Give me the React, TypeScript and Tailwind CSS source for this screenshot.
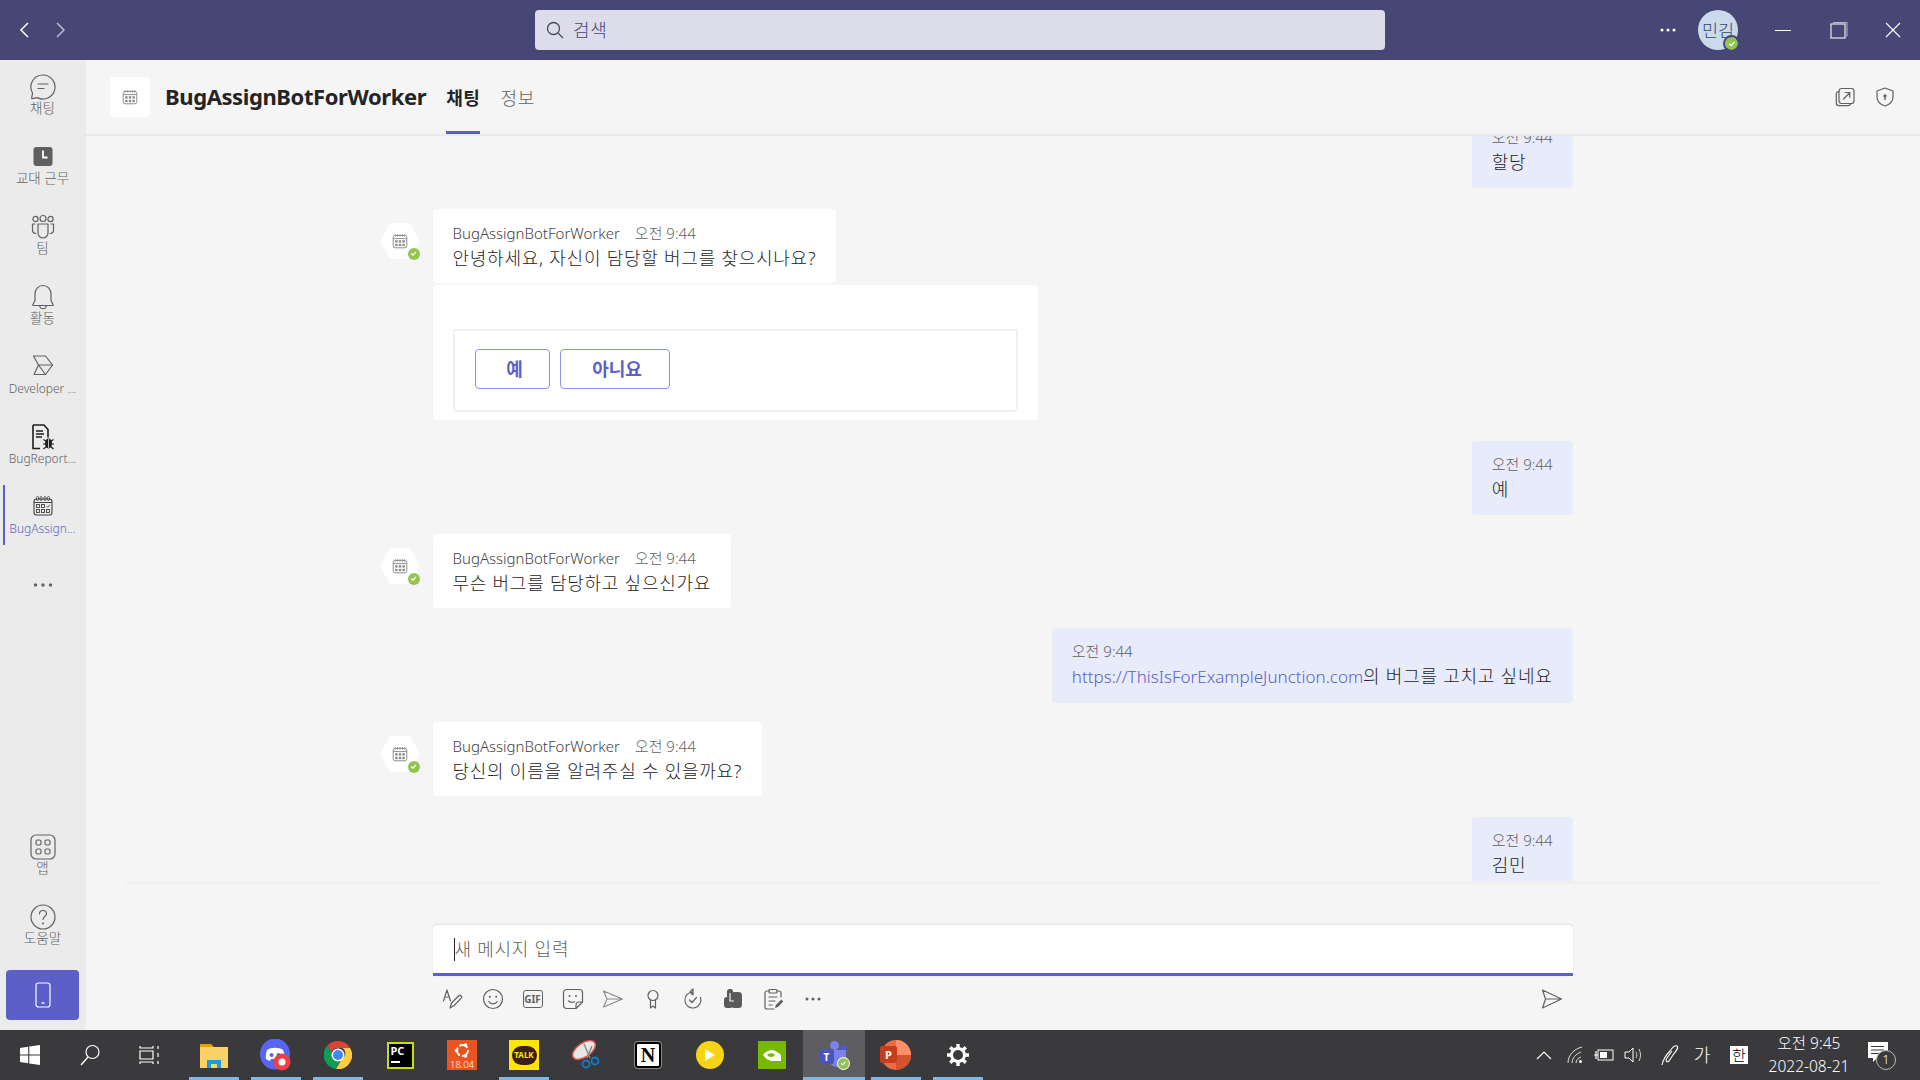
import React from 'react'

const Svg = ({w = 24, h = 24, vb, children, className = ''}: any) => (
    <svg width={w} height={h} viewBox={vb || `0 0 ${w} ${h}`} fill="none" className={`shrink-0 ${className}`}>
        {children}
    </svg>
)

const stroke = {stroke: '#616161', strokeWidth: 1.2, strokeLinecap: 'round', strokeLinejoin: 'round'} as const

function Calendar({size = 20, color = '#616161'}: any) {
    return (
        <Svg w={size} h={size} vb="0 0 20 20">
            <rect x="1.5" y="3" width="17" height="15.5" rx="2.5" stroke={color} strokeWidth="1.2" fill="none"/>
            <path d="M1.5 7h17" stroke={color} strokeWidth="1.2"/>
            <path d="M4 1.5v3M7 1.5v3M10 1.5v3M13 1.5v3M16 1.5v3" stroke={color} strokeWidth="1.3"/>
            <g fill={color}>
                <rect x="4" y="9" width="3" height="3"/>
                <rect x="8.5" y="9" width="3" height="3"/>
                <rect x="13" y="9" width="3" height="3"/>
                <rect x="4" y="13.5" width="3" height="3"/>
                <rect x="8.5" y="13.5" width="3" height="3"/>
                <rect x="13" y="13.5" width="3" height="3"/>
            </g>
        </Svg>
    )
}

function Check({size = 12, ring = ''}: any) {
    return (
        <span className={`flex items-center justify-center rounded-full bg-[#92c353] ${ring}`} style={{width: size, height: size}}>
            <svg width={size * 0.6} height={size * 0.6} viewBox="0 0 10 10" fill="none">
                <path d="M2 5.2l2.1 2.1L8 3" stroke="#fff" strokeWidth="1.6" strokeLinecap="round" strokeLinejoin="round"/>
            </svg>
        </span>
    )
}

const railIcons: any = {
    chat: (
        <Svg w={26} h={26}>
            <path d="M13 1a12 12 0 1 1-5.6 22.600L2.300 24.600c-.5.1-.8-.3-.7-.7l1-4.700A12 12 0 0 1 13 1z" {...stroke}/>
            <path d="M8 10h10M8 14.500h6" {...stroke}/>
        </Svg>
    ),
    shift: (
        <Svg w={26} h={26}>
            <rect x="3.500" y="3" width="19" height="19" rx="3" fill="#5f5f5f"/>
            <path d="M13 6.500v7h4.500" stroke="#fff" strokeWidth="1.800"/>
        </Svg>
    ),
    team: (
        <Svg w={26} h={26}>
            <circle cx="5.500" cy="5" r="2.600" {...stroke}/>
            <circle cx="13" cy="4.500" r="3" {...stroke}/>
            <circle cx="20.500" cy="5" r="2.600" {...stroke}/>
            <path d="M8 10h10v9a5 5 0 0 1-10 0v-9z" {...stroke}/>
            <path d="M5 10H2.500v6c0 2 1.200 3.300 3.300 3.500M21 10h2.500v6c0 2-1.200 3.300-3.300 3.500" {...stroke}/>
        </Svg>
    ),
    bell: (
        <Svg w={26} h={26}>
            <path d="M13 1.500c-5 0-8 4-8 8.500v6.500L2.800 20.700c-.2.400 0 .8.500.8h19.400c.5 0 .7-.4.500-.8L21 16.500V10c0-4.500-3-8.500-8-8.500z" {...stroke}/>
            <path d="M9.500 21.500c.3 2 1.700 3.200 3.500 3.200s3.200-1.200 3.500-3.200" {...stroke}/>
        </Svg>
    ),
    dev: (
        <Svg w={26} h={26}>
            <path d="M3.500 2h12l7 9-7 9.500H4L8.500 11 3.500 2z" {...stroke}/>
            <path d="M8.500 11h14M8.500 11l7 9.500" {...stroke}/>
        </Svg>
    ),
    bug: (
        <Svg w={26} h={26}>
            <path d="M3 1h11l4 4.500v8M10 24.500H3V1" stroke="#1f1f1f" strokeWidth="1.600"/>
            <path d="M6 7h7M6 10h8M6 13h6" stroke="#1f1f1f" strokeWidth="1.300"/>
            <ellipse cx="18.500" cy="19.500" rx="3.500" ry="5" fill="#1f1f1f"/>
            <path d="M13.500 15.500l3 2M23.500 15.500l-3 2M13 20h3M24 20h-3M13.500 25l3-2.500M23.500 25l-3-2.500" stroke="#1f1f1f" strokeWidth="1.100"/>
            <path d="M18.500 15v9" stroke="#ebebeb" strokeWidth="0.800"/>
        </Svg>
    ),
    calendar: (
        <Svg w={26} h={26}>
            <rect x="4" y="5" width="18" height="16" rx="2.500" stroke="#424242" strokeWidth="1.100"/>
            <path d="M4 8.500h18" stroke="#424242" strokeWidth="1"/>
            <path d="M6.500 3.500a1 1 0 0 1 2 0v2a1 1 0 0 1-2 0zM10 3.500a1 1 0 0 1 2 0v2a1 1 0 0 1-2 0zM14 3.500a1 1 0 0 1 2 0v2a1 1 0 0 1-2 0zM17.500 3.500a1 1 0 0 1 2 0v2a1 1 0 0 1-2 0z" stroke="#424242" strokeWidth="0.800"/>
            <g stroke="#424242" strokeWidth="0.900">
                <rect x="6.500" y="10.500" width="3" height="3"/>
                <rect x="11.500" y="10.500" width="3" height="3"/>
                <path d="M16.500 12l1.200 1.200 2-2.400"/>
                <rect x="6.500" y="15.500" width="3" height="3"/>
                <rect x="11.500" y="15.500" width="3" height="3"/>
                <rect x="16.500" y="15.500" width="3" height="3"/>
            </g>
        </Svg>
    ),
    dots: (
        <Svg w={26} h={26}>
            <circle cx="5.500" cy="13" r="1.700" fill="#616161"/>
            <circle cx="13" cy="13" r="1.700" fill="#616161"/>
            <circle cx="20.500" cy="13" r="1.700" fill="#616161"/>
        </Svg>
    ),
    apps: (
        <Svg w={26} h={26}>
            <rect x="1" y="1" width="24" height="24" rx="5" {...stroke}/>
            <rect x="6" y="6" width="5" height="5" rx="1.500" {...stroke}/>
            <rect x="15" y="6" width="5" height="5" rx="1.500" {...stroke}/>
            <rect x="6" y="15" width="5" height="5" rx="1.500" {...stroke}/>
            <rect x="15" y="15" width="5" height="5" rx="1.500" {...stroke}/>
        </Svg>
    ),
    help: (
        <Svg w={26} h={26}>
            <circle cx="13" cy="13" r="12" {...stroke}/>
            <path d="M9.500 10c0-2 1.500-3.500 3.500-3.500s3.500 1.400 3.500 3.300c0 2.700-3.500 2.700-3.500 5.700" {...stroke}/>
            <circle cx="13" cy="19.500" r="1" fill="#616161"/>
        </Svg>
    ),
}

function RailItem({icon, label, active, latin}: any) {
    return (
        <div className="relative flex h-[60px] w-full flex-col items-center pt-[9px]">
            {active && <div className="absolute left-[3px] top-0 h-[60px] w-[2px] bg-[#5b5fc7]"/>}
            {railIcons[icon]}
            <span className={`w-full truncate px-[6px] text-center leading-[17px] ${latin ? 'text-[12px]' : 'text-[13.500px]'} ${active ? 'text-[#5b5fc7]' : 'text-[#616161]'}`}>
                {label}
            </span>
        </div>
    )
}

function Rail() {
    return (
        <aside className="z-10 flex h-full w-[85px] shrink-0 flex-col items-center justify-between bg-[#ebebeb] pb-[10px] pt-[5px] shadow-[1px_0_2px_rgba(0,0,0,0.05)]">
            <div className="flex w-full flex-col items-center gap-[10px]">
                <RailItem icon="chat" label="채팅"/>
                <RailItem icon="shift" label="교대 근무"/>
                <RailItem icon="team" label="팀"/>
                <RailItem icon="bell" label="활동"/>
                <RailItem icon="dev" label="Developer ..." latin/>
                <RailItem icon="bug" label="BugReport..." latin/>
                <RailItem icon="calendar" label="BugAssign..." latin active/>
                <div className="flex h-[60px] items-center">{railIcons.dots}</div>
            </div>
            <div className="flex w-full flex-col items-center gap-[10px]">
                <RailItem icon="apps" label="앱"/>
                <RailItem icon="help" label="도움말"/>
                <button className="mt-[5px] flex h-[50px] w-[73px] items-center justify-center rounded-[4px] bg-[#5b5fc7]">
                    <Svg w={16} h={26}>
                        <rect x="1" y="1" width="14" height="24" rx="2.500" stroke="#fff" strokeWidth="1.200"/>
                        <path d="M6.500 21h3" stroke="#fff" strokeWidth="1.400"/>
                    </Svg>
                </button>
            </div>
        </aside>
    )
}

function TitleBar() {
    return (
        <header className="relative flex h-[60px] shrink-0 items-center bg-[#464775]">
            <div className="flex w-[85px] items-center justify-between pl-[18px] pr-[18px]">
                <Svg w={12} h={18}><path d="M10 2L3 9l7 7" stroke="#fff" strokeWidth="1.500"/></Svg>
                <Svg w={12} h={18}><path d="M2 2l7 7-7 7" stroke="#b9bad0" strokeWidth="1.500"/></Svg>
            </div>
            <div className="ml-[450px] flex h-[40px] w-[850px] items-center gap-[9px] rounded-[4px] bg-[#dcdcea] pl-[11px]">
                <Svg w={18} h={18}>
                    <circle cx="7.500" cy="7.500" r="6" stroke="#4a4a5a" strokeWidth="1.300"/>
                    <path d="M12 12l5 5" stroke="#4a4a5a" strokeWidth="1.300"/>
                </Svg>
                <span className="text-[18px] tracking-[0.8px] text-[#464775]">검색</span>
            </div>
            <div className="ml-auto flex items-center">
                <Svg w={18} h={6}>
                    <circle cx="3" cy="3" r="1.500" fill="#fff"/>
                    <circle cx="9" cy="3" r="1.500" fill="#fff"/>
                    <circle cx="15" cy="3" r="1.500" fill="#fff"/>
                </Svg>
                <div className="relative ml-[21px] flex h-[40px] w-[40px] items-center justify-center rounded-full bg-[#cbdaea] text-[17.500px] text-[#2f4a68]">
                    민김
                    <div className="absolute bottom-0 right-0">
                        <Check size={13} ring="outline outline-2 outline-[#464775]"/>
                    </div>
                </div>
                <div className="ml-[37px] flex h-[60px] w-[16px] items-center">
                    <div className="h-[1px] w-[16px] bg-white"/>
                </div>
                <div className="ml-[39px] flex h-[60px] items-center">
                    <Svg w={18} h={18}>
                        <path d="M3.500 2.500v-1h13.500v13.500h-1" stroke="#b9bad0" strokeWidth="1"/>
                        <rect x="1" y="3" width="14" height="14" stroke="#e8e8f2" strokeWidth="1.200"/>
                    </Svg>
                </div>
                <div className="ml-[37px] mr-[19px] flex h-[60px] items-center">
                    <Svg w={16} h={16}><path d="M1 1l14 14M15 1L1 15" stroke="#fff" strokeWidth="1.100"/></Svg>
                </div>
            </div>
        </header>
    )
}

function ChatHeader() {
    return (
        <div className="flex h-[76px] shrink-0 items-center border-b-2 border-[#ebebeb] pl-[25px] pr-[25px]">
            <div className="flex h-[40px] w-[40px] items-center justify-center rounded-[4px] bg-white">
                <Calendar size={16} color="#8a8a8a"/>
            </div>
            <h1 className="-mt-[2px] ml-[15px] text-[22px] font-bold leading-none tracking-[-0.4px] text-[#242424]">BugAssignBotForWorker</h1>
            <div className="relative ml-[20px] flex h-[74px] items-center pt-[2px] text-[18px] font-bold tracking-[0.6px] text-[#242424]">
                채팅
                <div className="absolute bottom-0 left-0 h-[3px] w-full bg-[#5b5fc7]"/>
            </div>
            <span className="ml-[20px] pt-[2px] text-[18px] tracking-[0.6px] text-[#616161]">정보</span>
            <div className="ml-auto flex items-center gap-[20px]">
                <Svg w={20} h={20}>
                    <rect x="4" y="1.500" width="15" height="15" rx="2.500" {...stroke}/>
                    <path d="M4 4.500c-2 0-2.700 1-2.700 2.500v9c0 1.700 1 2.700 2.700 2.700h9c1.500 0 2.500-.7 2.500-2.200" {...stroke}/>
                    <path d="M8.500 12l6-6M10 5.500h4.800v4.800" {...stroke}/>
                </Svg>
                <Svg w={20} h={20}>
                    <path d="M10 1l8 3v6c0 4.500-3.500 7.500-8 9-4.500-1.500-8-4.500-8-9V4l8-3z" {...stroke}/>
                    <circle cx="10" cy="8.800" r="1.600" fill="#616161"/>
                    <path d="M10 9v4" stroke="#616161" strokeWidth="1.400"/>
                </Svg>
            </div>
        </div>
    )
}

function BotAvatar() {
    return (
        <div className="absolute -left-[53px] top-[14px] h-[36px] w-[40px]">
            <svg width="40" height="36" viewBox="0 0 40 36" className="absolute inset-0">
                <path d="M10 0h20l10 18-10 18H10L0 18z" fill="#fff"/>
            </svg>
            <div className="absolute left-[12px] top-[10px]"><Calendar size={16} color="#8a8a8a"/></div>
            <div className="absolute right-0 top-[25px]"><Check size={12}/></div>
        </div>
    )
}

function BotBubble({text, className = ''}: any) {
    return (
        <div className={`relative self-start rounded-[4px] bg-white px-[20px] pb-[12px] pt-[14px] ${className}`}>
            <BotAvatar/>
            <div className="flex h-[20px] items-center text-[15px] text-[#424242]">
                <span>BugAssignBotForWorker</span>
                <span className="ml-[15px] text-[#616161]">오전 9:44</span>
            </div>
            <p className="mt-[2px] whitespace-nowrap text-[18px] leading-[26px] tracking-[0.75px] text-[#242424]">{text}</p>
        </div>
    )
}

function SelfBubble({children, className = ''}: any) {
    return (
        <div className={`self-end rounded-[4px] bg-[#e8ebfa] px-[20px] pb-[13px] pt-[13px] ${className}`}>
            <div className="flex h-[20px] items-center text-[15px] text-[#616161]">오전 9:44</div>
            <p className="mt-[2px] whitespace-nowrap text-[18px] leading-[26px] tracking-[0.75px] text-[#242424]">{children}</p>
        </div>
    )
}

function Messages() {
    return (
        <div className="min-h-0 flex-1 overflow-hidden">
            <div className="mx-auto -mt-[22px] flex w-[1140px] flex-col">
                <SelfBubble>할당</SelfBubble>
                <BotBubble className="mt-[21px]" text="안녕하세요, 자신이 담당할 버그를 찾으시나요?"/>
                <div className="mt-[2px] w-[605px] rounded-[4px] bg-white px-[20px] pb-[8px] pt-[44px]">
                    <div className="flex h-[83px] gap-[10px] rounded-b-[4px] border-2 border-[#f0f0f0] px-[20px] pt-[18px]">
                        <button className="h-[40px] w-[75px] rounded-[4px] border border-[#8f92ec] pl-[5px] text-[18px] font-bold text-[#5b5fc7]">예</button>
                        <button className="h-[40px] w-[110px] rounded-[4px] border border-[#8f92ec] pl-[5px] text-[18px] font-bold text-[#5b5fc7]">아니요</button>
                    </div>
                </div>
                <SelfBubble className="mt-[21px]">예</SelfBubble>
                <BotBubble className="mt-[19px]" text="무슨 버그를 담당하고 싶으신가요"/>
                <SelfBubble className="mt-[20px]">
                    <span className="text-[17px] tracking-normal text-[#5b5fc7]">https://ThisIsForExampleJunction.com</span>의 버그를 고치고 싶네요
                </SelfBubble>
                <BotBubble className="mt-[19px]" text="당신의 이름을 알려주실 수 있을까요?"/>
                <SelfBubble className="mt-[21px]">김민</SelfBubble>
            </div>
        </div>
    )
}

function Compose() {
    const icons = [
        <Svg w={22} h={22} key="format">
            <path d="M1.500 13L5 2l3.500 11M2.800 9h4.500" {...stroke}/>
            <path d="M8 20l1.500-5L17 7.500c1-1 3.500 1 2.500 2.300L12 17.500 8 20z" {...stroke}/>
        </Svg>,
        <Svg w={22} h={22} key="emoji">
            <circle cx="11" cy="11" r="9.500" {...stroke}/>
            <circle cx="7.800" cy="8.800" r="1" fill="#616161"/>
            <circle cx="14.200" cy="8.800" r="1" fill="#616161"/>
            <path d="M6.800 13.500c1 1.700 2.500 2.400 4.200 2.400s3.200-.7 4.200-2.400" {...stroke}/>
        </Svg>,
        <div key="gif" className="flex h-[18px] w-[20px] items-center justify-center rounded-[3px] border-[1.3px] border-[#616161] text-[10px] font-bold leading-none text-[#616161]">GIF</div>,
        <Svg w={22} h={22} key="sticker">
            <path d="M14 20.500H4.500a3 3 0 0 1-3-3v-13a3 3 0 0 1 3-3h13a3 3 0 0 1 3 3V14l-6.500 6.500z" {...stroke}/>
            <path d="M14 20.500V17a3 3 0 0 1 3-3h3.500" {...stroke}/>
            <circle cx="7.500" cy="8" r="1" fill="#616161"/>
            <circle cx="14" cy="8" r="1" fill="#616161"/>
            <path d="M6.500 13c1.500 1.500 3.500 1.700 6 .7" {...stroke}/>
        </Svg>,
        <Svg w={22} h={22} key="arrow">
            <path d="M1.500 3L20.500 11 1.500 19l3.500-8-3.500-8zM5 11h15.500" stroke="#8a8a8a" strokeWidth="1.100" strokeLinejoin="round"/>
        </Svg>,
        <Svg w={22} h={22} key="medal">
            <circle cx="11" cy="7.500" r="5" {...stroke}/>
            <path d="M8.500 12v8l2.500-2 2.500 2v-8" {...stroke}/>
        </Svg>,
        <Svg w={22} h={22} key="loop">
            <path d="M11 4a8 8 0 1 0 7.500 5.500M11 1v6l-3-3 3-3z" {...stroke}/>
            <path d="M7.500 12l2.500 2.500 4.500-5" {...stroke}/>
        </Svg>,
        <Svg w={22} h={22} key="praise">
            <rect x="9" y="4" width="11" height="16" rx="3.500" fill="#5a5a5a"/>
            <rect x="5" y="1" width="6" height="12" rx="2.500" fill="#5a5a5a"/>
            <rect x="2" y="9" width="9" height="11" rx="3" fill="#5a5a5a"/>
            <path d="M8 5v8h4" stroke="#f5f5f5" strokeWidth="1.200"/>
        </Svg>,
        <Svg w={22} h={22} key="clip">
            <path d="M7 3H5a2 2 0 0 0-2 2v14a2 2 0 0 0 2 2h7M15 3h2a2 2 0 0 1 2 2v4" {...stroke}/>
            <rect x="7" y="1.500" width="8" height="3.500" rx="1" {...stroke}/>
            <path d="M7 9h8M7 13h6M7 17h3" {...stroke}/>
            <path d="M13 20l.8-3 5.500-5.500 2 2-5.300 5.500-3 1z" fill="#616161"/>
        </Svg>,
        <Svg w={18} h={6} key="more">
            <circle cx="3" cy="3" r="1.500" fill="#616161"/>
            <circle cx="9" cy="3" r="1.500" fill="#616161"/>
            <circle cx="15" cy="3" r="1.500" fill="#616161"/>
        </Svg>,
    ]
    return (
        <div className="h-[149px] shrink-0">
            <div className="mx-[40px] h-[3px] bg-[#f0f0f0]"/>
            <div className="mx-auto mt-[40px] w-[1140px]">
                <div className="flex h-[52px] items-center rounded-t-[4px] border-b-[3px] border-t border-b-[#5b5fc7] border-t-[#e6e6e6] bg-white pl-[21px] shadow-[0_0_1px_rgba(0,0,0,0.2)]">
                    <div className="h-[23px] w-[1px] bg-[#242424]"/>
                    <span className="text-[18px] tracking-[0.75px] text-[#616161]">새 메시지 입력</span>
                </div>
                <div className="mt-[3px] flex h-[40px] items-center">
                    {icons.map((icon, i) => (
                        <div key={i} className="flex h-[40px] w-[40px] items-center justify-center">{icon}</div>
                    ))}
                    <div className="ml-auto mr-[10px] flex h-[40px] w-[22px] items-center justify-center">
                        <Svg w={22} h={22}>
                            <path d="M1.500 2L20.500 11 1.500 20l3-9-3-9zM4.500 11H20" {...stroke}/>
                        </Svg>
                    </div>
                </div>
            </div>
        </div>
    )
}

const taskIcons = [
    {
        key: 'folder', bar: true,
        el: (
            <Svg w={28} h={26}>
                <path d="M0 2h11l3 3H0z" fill="#e2a100"/>
                <rect x="0" y="5" width="28" height="21" fill="#fcd264"/>
                <path d="M7 26v-8h14v8h-4v-4h-6v4z" fill="#1d9be0"/>
            </Svg>
        ),
    },
    {
        key: 'discord', bar: true,
        el: (
            <Svg w={32} h={32}>
                <ellipse cx="15" cy="15" rx="15" ry="15.500" fill="#5865f2"/>
                <path d="M7 11c4-3 12-3 16 0 1.500 3 2 6 1.500 9-1.500 1.200-3 1.700-4 2l-1-2h-8.500l-1 2c-1-.3-2.500-.8-4-2-.5-3 0-6 1-9z" fill="#fff"/>
                <circle cx="11.500" cy="16" r="2" fill="#5865f2"/>
                <circle cx="18.500" cy="16" r="2" fill="#5865f2"/>
                <circle cx="22" cy="23" r="8.500" fill="#ed4245"/>
                <circle cx="22" cy="23" r="3.500" fill="#fff"/>
            </Svg>
        ),
    },
    {
        key: 'chrome', bar: true,
        el: (
            <Svg w={28} h={28}>
                <path d="M14 0a14 14 0 0 1 12.100 7H14a7 7 0 0 0-6.500 4.500L3.500 4.500A14 14 0 0 1 14 0z" fill="#db4437"/>
                <path d="M3.500 4.500l5.800 10a6 6 0 0 0 6.500 5.500L12 28A14 14 0 0 1 3.500 4.500z" fill="#0f9d58"/>
                <path d="M26.100 7A14 14 0 0 1 12 28l6-10.500a6 6 0 0 0 .5-10.500z" fill="#ffcd40"/>
                <circle cx="14" cy="14" r="6.500" fill="#fff"/>
                <circle cx="14" cy="14" r="5" fill="#4285f4"/>
            </Svg>
        ),
    },
    {
        key: 'pycharm',
        el: (
            <div className="flex h-[27px] w-[27px] flex-col border-2 border-[#c8dc1e] bg-black pl-[2px] pt-[1px] text-[11px] font-bold leading-[12px] text-white">
                PC
                <div className="mt-[4px] h-[2px] w-[9px] bg-white"/>
            </div>
        ),
    },
    {
        key: 'ubuntu',
        el: (
            <div className="flex h-[30px] w-[30px] flex-col items-center bg-[#e95420] pt-[2px]">
                <Svg w={17} h={17}>
                    <circle cx="8.500" cy="8.500" r="5.500" stroke="#fff" strokeWidth="1.800" strokeDasharray="9 2"/>
                    <circle cx="2.500" cy="8.500" r="1.800" fill="#fff"/>
                    <circle cx="11.500" cy="3" r="1.800" fill="#fff"/>
                    <circle cx="11.500" cy="14" r="1.800" fill="#fff"/>
                </Svg>
                <span className="text-[9.500px] leading-[11px] text-white">18.04</span>
            </div>
        ),
    },
    {
        key: 'talk', bar: true,
        el: (
            <div className="relative flex h-[30px] w-[30px] items-center justify-center bg-[#ffe600]">
                <div className="flex h-[19px] w-[25px] items-center justify-center rounded-full bg-[#3c1e1e] text-[8px] font-bold leading-none text-[#ffe600]">TALK</div>
            </div>
        ),
    },
    {
        key: 'snip',
        el: (
            <Svg w={30} h={30}>
                <ellipse cx="13" cy="10" rx="13" ry="7" transform="rotate(-35 13 10)" fill="#e8e8e8" stroke="#d9534f" strokeWidth="1.500"/>
                <path d="M13 4l6 14M21 6l-5 12" stroke="#8a8a8a" strokeWidth="1.500"/>
                <circle cx="15" cy="24" r="3.500" stroke="#0f7fd0" strokeWidth="1.800"/>
                <circle cx="24" cy="21" r="3.500" stroke="#0f7fd0" strokeWidth="1.800"/>
            </Svg>
        ),
    },
    {
        key: 'notion',
        el: (
            <div className="flex h-[26px] w-[26px] items-center justify-center rounded-[3px] border-2 border-black bg-white font-['Liberation_Serif',serif] text-[20px] font-bold leading-none text-black shadow-[0_0_0_1px_#888]">N</div>
        ),
    },
    {
        key: 'play',
        el: (
            <div className="flex h-[28px] w-[28px] items-center justify-center rounded-full bg-[#f7d416]">
                <Svg w={12} h={14}><path d="M1 1l10 6-10 6z" fill="#fff"/></Svg>
            </div>
        ),
    },
    {
        key: 'nvidia',
        el: (
            <div className="flex h-[28px] w-[28px] items-center justify-center bg-[#76b900]">
                <Svg w={20} h={14}>
                    <path d="M1 7c3-5 10-6 14-3 2 1 3 2 4 3v6h-8c-4 0-7-2-10-6z" fill="#fff"/>
                    <path d="M5 7c2-2.500 6-2.500 8 0-2 2.500-6 2.500-8 0z" fill="#76b900"/>
                </Svg>
            </div>
        ),
    },
    {
        key: 'teams', bar: true, active: true,
        el: (
            <div className="relative h-[28px] w-[30px]">
                <div className="absolute left-[11px] top-0 h-[9px] w-[9px] rounded-full bg-[#7b83eb]"/>
                <div className="absolute right-[2px] top-[4px] h-[7px] w-[7px] rounded-full bg-[#5059c9]"/>
                <div className="absolute bottom-[2px] left-[10px] h-[17px] w-[17px] rounded-b-[8px] bg-[#7b83eb]"/>
                <div className="absolute left-0 top-[8px] flex h-[15px] w-[15px] items-center justify-center rounded-[2px] bg-[#4b53bc] text-[10px] font-bold leading-none text-white">T</div>
                <div className="absolute -bottom-[1px] -right-[1px] rounded-full bg-white p-[1px]"><Check size={11}/></div>
            </div>
        ),
    },
    {
        key: 'ppt', bar: true,
        el: (
            <div className="relative h-[30px] w-[30px]">
                <div className="absolute right-0 top-0 h-[30px] w-[30px] overflow-hidden rounded-full bg-[#ed6c47]">
                    <div className="ml-[15px] h-[15px] w-[15px] bg-[#ff8f6b]"/>
                    <div className="ml-[15px] h-[15px] w-[15px] bg-[#d35230]"/>
                </div>
                <div className="absolute -left-[1px] top-[6px] flex h-[17px] w-[17px] items-center justify-center rounded-[2px] bg-[#c43e1c] text-[11px] font-bold leading-none text-white">P</div>
            </div>
        ),
    },
    {
        key: 'gear', bar: true,
        el: (
            <Svg w={24} h={24}>
                <circle cx="12" cy="12" r="6.500" stroke="#fff" strokeWidth="3"/>
                <path d="M12 1v5M12 18v5M1 12h5M18 12h5M4.200 4.200l3.600 3.600M16.200 16.200l3.600 3.600M19.800 4.200l-3.600 3.600M7.800 16.200l-3.600 3.600" stroke="#fff" strokeWidth="3.400"/>
            </Svg>
        ),
    },
]

function Taskbar() {
    return (
        <footer className="flex h-[50px] shrink-0 items-center bg-[#3a3a3c] text-white">
            <div className="flex h-full w-[60px] items-center justify-center">
                <Svg w={20} h={20}>
                    <path d="M0 3l8.200-1.200v7.700H0zM9.300 1.600L20 0v9.500H9.300zM0 10.500h8.200v7.700L0 17zM9.300 10.500H20V20L9.300 18.400z" fill="#fff"/>
                </Svg>
            </div>
            <div className="flex h-full w-[60px] items-center justify-center">
                <Svg w={22} h={22}>
                    <circle cx="13.500" cy="8" r="6.500" stroke="#fff" strokeWidth="1.200"/>
                    <path d="M9 13L2 21" stroke="#fff" strokeWidth="1.300"/>
                </Svg>
            </div>
            <div className="flex h-full w-[63px] items-center justify-center pr-[3px]">
                <Svg w={22} h={20}>
                    <path d="M1 1v2h13V1M1 19v-2h13v2M1 6h13v8H1z" stroke="#fff" strokeWidth="1.200"/>
                    <path d="M19 1v3M19 8v4M19 16v3" stroke="#fff" strokeWidth="1.200"/>
                </Svg>
            </div>
            {taskIcons.map(t => (
                <div key={t.key} className={`relative flex h-full w-[62px] items-center justify-center ${t.active ? 'bg-[#5e5e60]' : ''}`}>
                    {t.el}
                    {t.bar && <div className={`absolute bottom-0 h-[3px] bg-[#76b9ed] ${t.active ? 'inset-x-0' : 'inset-x-[6px]'}`}/>}
                </div>
            ))}
            <div className="ml-auto flex h-full items-center">
                <Svg w={16} h={10} className="mr-[15px]"><path d="M1 9l7-7 7 7" stroke="#fff" strokeWidth="1.100"/></Svg>
                <Svg w={16} h={18} className="mr-[11px]">
                    <path d="M1 17C1 9 7 3 15 1M5 17c0-5 4-9 9-11M9 17c0-3 2-5 5-6" stroke="#ddd" strokeWidth="1"/>
                    <circle cx="13.500" cy="15.500" r="1.500" fill="#fff"/>
                </Svg>
                <Svg w={20} h={14} className="mr-[10px]">
                    <rect x="4" y="2" width="15" height="10" stroke="#fff" strokeWidth="1"/>
                    <rect x="6" y="4" width="7" height="6" fill="#fff"/>
                    <path d="M0 7h4M2 3v8" stroke="#fff" strokeWidth="1.200"/>
                </Svg>
                <Svg w={20} h={18} className="mr-[16px]">
                    <path d="M1 6h4l4-4v14l-4-4H1z" stroke="#fff" strokeWidth="1"/>
                    <path d="M12 6c1 2 1 4 0 6M15 3c2 4 2 8 0 12" stroke="#ccc" strokeWidth="1"/>
                </Svg>
                <Svg w={20} h={22} className="mr-[13px]">
                    <path d="M2 21c1-5 4-10 8-14 2-3 5-6 7-5 2 2-1 5-4 9l-4 6c-2 2-4 0-2-3l5-7" stroke="#fff" strokeWidth="1.100"/>
                </Svg>
                <span className="mr-[19px] w-[18px] text-center text-[18px] leading-none">가</span>
                <div className="mr-[21px] flex h-[18px] w-[18px] items-center justify-center bg-white text-[15px] leading-none text-black">한</div>
                <div className="mr-[19px] flex w-[80px] flex-col items-center whitespace-nowrap text-[15.500px] leading-[23px]">
                    <span className="h-[23px]">오전 9:45</span>
                    <span className="h-[23px]">2022-08-21</span>
                </div>
                <div className="relative mr-[30px] h-[28px] w-[22px]">
                    <Svg w={20} h={20} className="absolute left-0 top-[1px]">
                        <path d="M0 0h20v16H9l-4 4v-4H0z" fill="#fff"/>
                        <path d="M3 4.500h13M3 8h13M3 11.500h8" stroke="#3a3a3c" strokeWidth="1"/>
                    </Svg>
                    <div className="absolute left-[8px] top-[9px] flex h-[20px] w-[20px] items-center justify-center rounded-full border border-[#bbb] bg-[#3a3a3c] text-[12px] leading-none">1</div>
                </div>
            </div>
        </footer>
    )
}

export default function App() {
    return (
        <div className="flex h-[1080px] w-[1920px] flex-col overflow-hidden bg-[#f5f5f5] font-['Noto_Sans','Noto_Sans_CJK_KR',sans-serif] font-light">
            <TitleBar/>
            <div className="flex min-h-0 flex-1">
                <Rail/>
                <main className="flex min-w-0 flex-1 flex-col">
                    <ChatHeader/>
                    <Messages/>
                    <Compose/>
                </main>
            </div>
            <Taskbar/>
        </div>
    )
}
